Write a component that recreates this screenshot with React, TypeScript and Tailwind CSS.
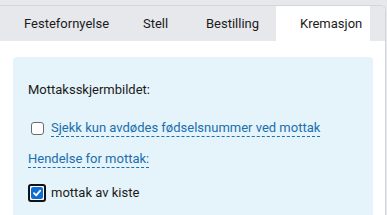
import React from 'react';

const tabs = [
  { label: 'Festefornyelse', w: 'w-[119px]' },
  { label: 'Stell', w: 'w-[63px]' },
  { label: 'Bestilling', w: 'w-[94px]' },
  { label: 'Kremasjon', w: 'w-[94px]', active: true },
];

export default function App() {
  return (
    <div
      className="h-[215px] w-[387px] overflow-hidden bg-[#e6e8ec] pt-[5px] pr-[1px]"
      style={{ fontFamily: 'Roboto, "Liberation Sans", sans-serif' }}
    >
      <div className="h-full rounded-tr-[6px] border-t border-r border-[#d3d5d9] bg-white overflow-hidden">
        {/* Tabs */}
        <div className="flex h-[35px] bg-[#e6e8ec] text-[13px] text-[#1b1b1b]">
          {tabs.map((t) => (
            <div
              key={t.label}
              className={`${t.w} flex items-center pl-6 pr-2 pt-[1px] ${t.active ? 'bg-white' : ''}`}
            >
              {t.label}
            </div>
          ))}
        </div>

        {/* Panel */}
        <div className="pt-[16px] pl-[13px] pr-[12px]">
          <div className="h-[200px] rounded-t-[4px] bg-[#e5f3fa] pl-[15px] pt-[25px] text-[13px]">
            <div className="text-[#1b1b1b] leading-[16px]">Mottaksskjermbildet:</div>

            <label className="mt-[22px] flex items-center gap-[7px] pl-[3px]">
              <span className="h-[13px] w-[13px] rounded-[3px] border border-[#6b6b6b] bg-white" />
              <span className="border-b border-dashed border-[#1a6fae] leading-[16px] text-[#1a6fae]">
                Sjekk kun avdødes fødselsnummer ved mottak
              </span>
            </label>

            <div className="mt-[14px] flex">
              <span className="border-b border-dashed border-[#1a6fae] leading-[16px] text-[#1a6fae]">
                Hendelse for mottak:
              </span>
            </div>

            <label className="mt-[16px] flex items-center gap-[5px]">
              <span className="flex h-[18px] w-[18px] items-center justify-center rounded-[3px] border-2 border-[#111] bg-white">
                <span className="flex h-[12px] w-[12px] items-center justify-center rounded-[2px] bg-[#0b6fd6]">
                  <svg width="10" height="10" viewBox="0 0 10 10" fill="none">
                    <path d="M2 5.2 L4.2 7.4 L8.2 2.6" stroke="white" strokeWidth="1.8" strokeLinecap="round" strokeLinejoin="round" />
                  </svg>
                </span>
              </span>
              <span className="leading-[16px] text-[#1b1b1b]">mottak av kiste</span>
            </label>
          </div>
        </div>
      </div>
    </div>
  );
}
